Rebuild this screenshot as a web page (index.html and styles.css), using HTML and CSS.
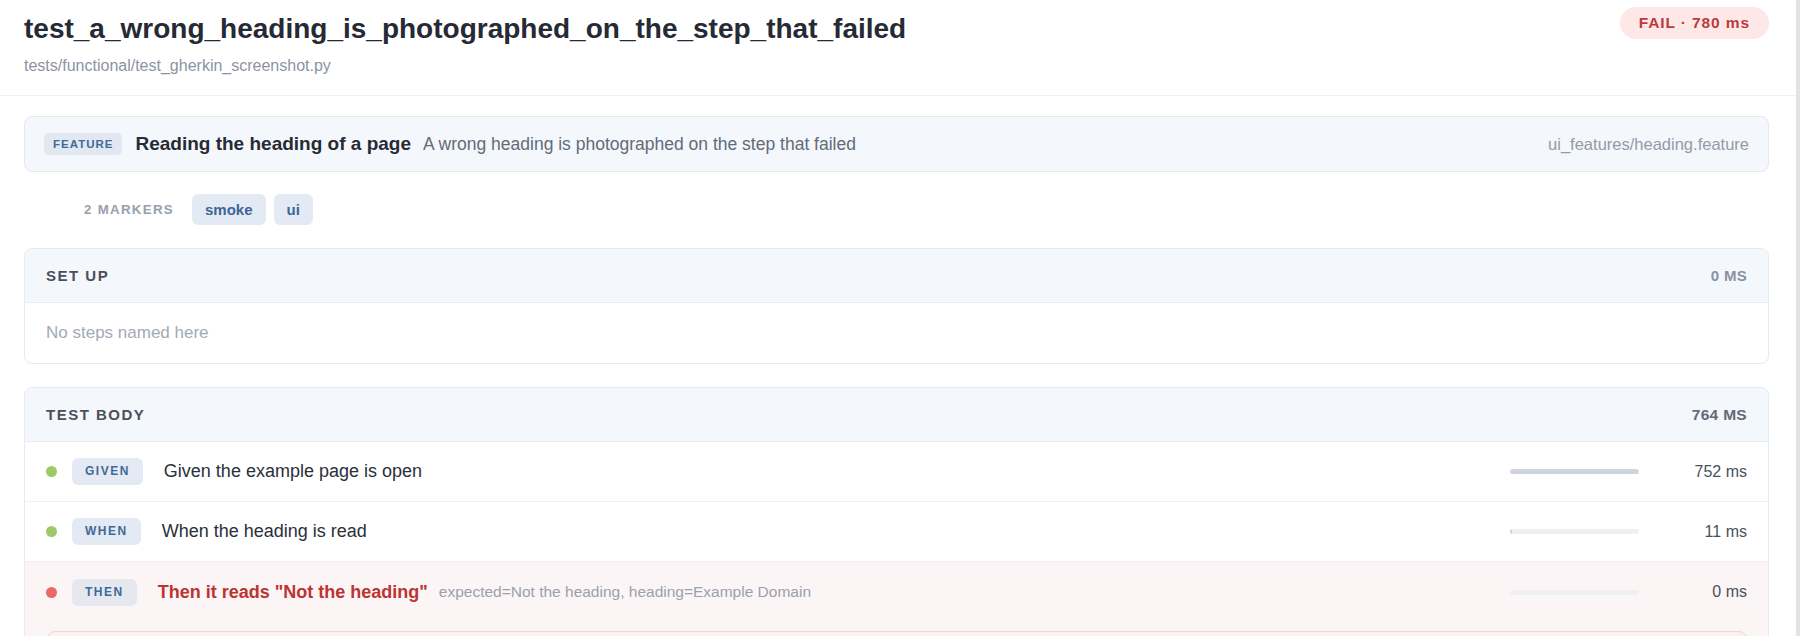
FILE: index.html
```html
<!DOCTYPE html>
<html>
<head>
<meta charset="utf-8">
<link rel="stylesheet" href="styles.css">
</head>
<body>
<div class="page">
  <main class="main">
    <header class="top">
      <div class="top-text">
        <h1 class="title">test_a_wrong_heading_is_photographed_on_the_step_that_failed</h1>
        <div class="path">tests/functional/test_gherkin_screenshot.py</div>
      </div>
      <div class="status">FAIL · 780 ms</div>
    </header>
    <section class="content">
      <div class="feature">
        <span class="feature-tag">FEATURE</span>
        <span class="feature-name">Reading the heading of a page</span>
        <span class="feature-desc">A wrong heading is photographed on the step that failed</span>
        <span class="feature-file">ui_features/heading.feature</span>
      </div>
      <div class="markers">
        <span class="markers-label">2 MARKERS</span>
        <span class="chip">smoke</span>
        <span class="chip">ui</span>
      </div>
      <div class="card">
        <div class="card-head">
          <span class="card-title">SET UP</span>
          <span class="card-time muted">0 MS</span>
        </div>
        <div class="empty">No steps named here</div>
      </div>
      <div class="card">
        <div class="card-head">
          <span class="card-title">TEST BODY</span>
          <span class="card-time">764 MS</span>
        </div>
        <div class="step">
          <span class="dot pass"></span>
          <span class="kw">GIVEN</span>
          <span class="step-text">Given the example page is open</span>
          <span class="bar"><span class="fill" style="width:100%"></span></span>
          <span class="dur">752 ms</span>
        </div>
        <div class="step">
          <span class="dot pass"></span>
          <span class="kw">WHEN</span>
          <span class="step-text">When the heading is read</span>
          <span class="bar"><span class="fill" style="width:1.5%"></span></span>
          <span class="dur">11 ms</span>
        </div>
        <div class="step-failed">
          <div class="step">
            <span class="dot fail"></span>
            <span class="kw">THEN</span>
            <span class="step-text failed">Then it reads "Not the heading"</span>
            <span class="args">expected=Not the heading, heading=Example Domain</span>
            <span class="bar"><span class="fill" style="width:0%"></span></span>
            <span class="dur">0 ms</span>
          </div>
          <div class="error">AssertionError: expected "Not the heading", got "Example Domain"</div>
        </div>
      </div>
    </section>
  </main>
  <div class="scroll"></div>
</div>
</body>
</html>
```

FILE: styles.css
```css
* { box-sizing: border-box; }
html, body { margin: 0; padding: 0; background: #ffffff; }
body {
  font-family: "Liberation Sans", Arial, Helvetica, sans-serif;
  color: #2b303b;
  height: 636px;
  overflow: hidden;
}
.page { display: flex; height: 636px; }
.main { flex: 1; min-width: 0; }
.scroll { width: 4px; background: #e3e3e3; flex: none; }

.top {
  display: flex;
  justify-content: space-between;
  align-items: flex-start;
  padding: 7px 27px 19px 24px;
  border-bottom: 1px solid #eef0f5;
}
.top-text { padding-top: 5px; }
.title {
  margin: 0;
  font-size: 28px;
  line-height: 34px;
  font-weight: 700;
  color: #252a34;
}
.path {
  margin-top: 10px;
  font-size: 16px;
  line-height: 20px;
  color: #8c94a3;
}
.status {
  height: 32px;
  line-height: 32px;
  padding: 0 19px;
  border-radius: 16px;
  background: #fde8e7;
  color: #bb3b3b;
  font-weight: 700;
  font-size: 15.5px;
  letter-spacing: 0.9px;
  white-space: nowrap;
}

.content { padding: 20px 27px 0 24px; }

.feature {
  display: flex;
  align-items: center;
  height: 56px;
  padding: 0 19px;
  background: #f4f7fb;
  border: 1px solid #e4e9f0;
  border-radius: 8px;
}
.feature-tag {
  height: 22px;
  line-height: 22px;
  padding: 0 9px;
  border-radius: 5px;
  background: #e2e8f1;
  color: #41699a;
  font-size: 11.5px;
  font-weight: 700;
  letter-spacing: 1px;
}
.feature-name {
  margin-left: 13px;
  font-size: 19px;
  font-weight: 700;
  color: #262b35;
}
.feature-desc {
  margin-left: 12px;
  font-size: 17.5px;
  color: #636b79;
}
.feature-file {
  margin-left: auto;
  font-size: 16.5px;
  color: #939baa;
}

.markers {
  display: flex;
  align-items: center;
  gap: 8px;
  padding-left: 60px;
  margin-top: 22px;
  height: 31px;
}
.markers-label {
  font-size: 13.3px;
  font-weight: 700;
  letter-spacing: 1.3px;
  color: #98a0ae;
  margin-right: 10px;
}
.chip {
  height: 31px;
  line-height: 31px;
  padding: 0 13px;
  border-radius: 6px;
  background: #e4eaf3;
  color: #3c6698;
  font-size: 15px;
  font-weight: 700;
}

.card {
  margin-top: 23px;
  border: 1px solid #e6ebf1;
  border-radius: 8px;
  overflow: hidden;
}
.card-head {
  display: flex;
  justify-content: space-between;
  align-items: center;
  height: 54px;
  padding: 0 21px;
  background: #f4f7fb;
  border-bottom: 1px solid #e9edf3;
}
.card-title {
  font-size: 15px;
  font-weight: 700;
  letter-spacing: 1.5px;
  color: #4a505d;
}
.card-time {
  font-size: 15.5px;
  font-weight: 700;
  letter-spacing: 0.3px;
  color: #636a78;
}
.card-time.muted { color: #8a92a0; font-size: 15px; }
.empty {
  height: 60px;
  line-height: 60px;
  padding: 0 21px;
  font-size: 17px;
  color: #a3aab6;
}

.step {
  display: flex;
  align-items: center;
  height: 60px;
  padding: 0 21px;
  border-bottom: 1px solid #eef1f5;
}
.step-failed { background: #fcf5f5; padding-bottom: 20px; }
.step-failed .step { border-bottom: none; height: 60px; }
.dot {
  width: 11px;
  height: 11px;
  border-radius: 50%;
  flex: none;
}
.dot.pass { background: #9ccb66; }
.dot.fail { background: #ea6a68; }
.kw {
  margin-left: 15px;
  height: 27px;
  line-height: 27px;
  padding: 0 13px;
  border-radius: 6px;
  background: #e4eaf3;
  color: #3f6999;
  font-size: 12px;
  font-weight: 700;
  letter-spacing: 1.5px;
}
.step-failed .kw { background: #e6e8ef; }
.step-text {
  margin-left: 21px;
  font-size: 18px;
  color: #2b303a;
}
.step-text.failed { color: #bb3434; font-weight: 700; }
.args {
  margin-left: 11px;
  font-size: 15.5px;
  color: #9aa1ad;
}
.bar {
  margin-left: auto;
  width: 129px;
  height: 5px;
  border-radius: 3px;
  background: #eef0f4;
  overflow: hidden;
  flex: none;
}
.fill { display: block; height: 100%; background: #ced4dd; border-radius: 3px; }
.dur {
  width: 108px;
  text-align: right;
  font-size: 16px;
  color: #4a505c;
  flex: none;
}
.error {
  margin: 9px 21px 0 22px;
  padding: 16px 18px;
  border: 1px solid #f4d3d3;
  border-radius: 8px;
  background: #fdf0f0;
  color: #9b2c2c;
  font-family: "Liberation Mono", monospace;
  font-size: 13px;
}
```
